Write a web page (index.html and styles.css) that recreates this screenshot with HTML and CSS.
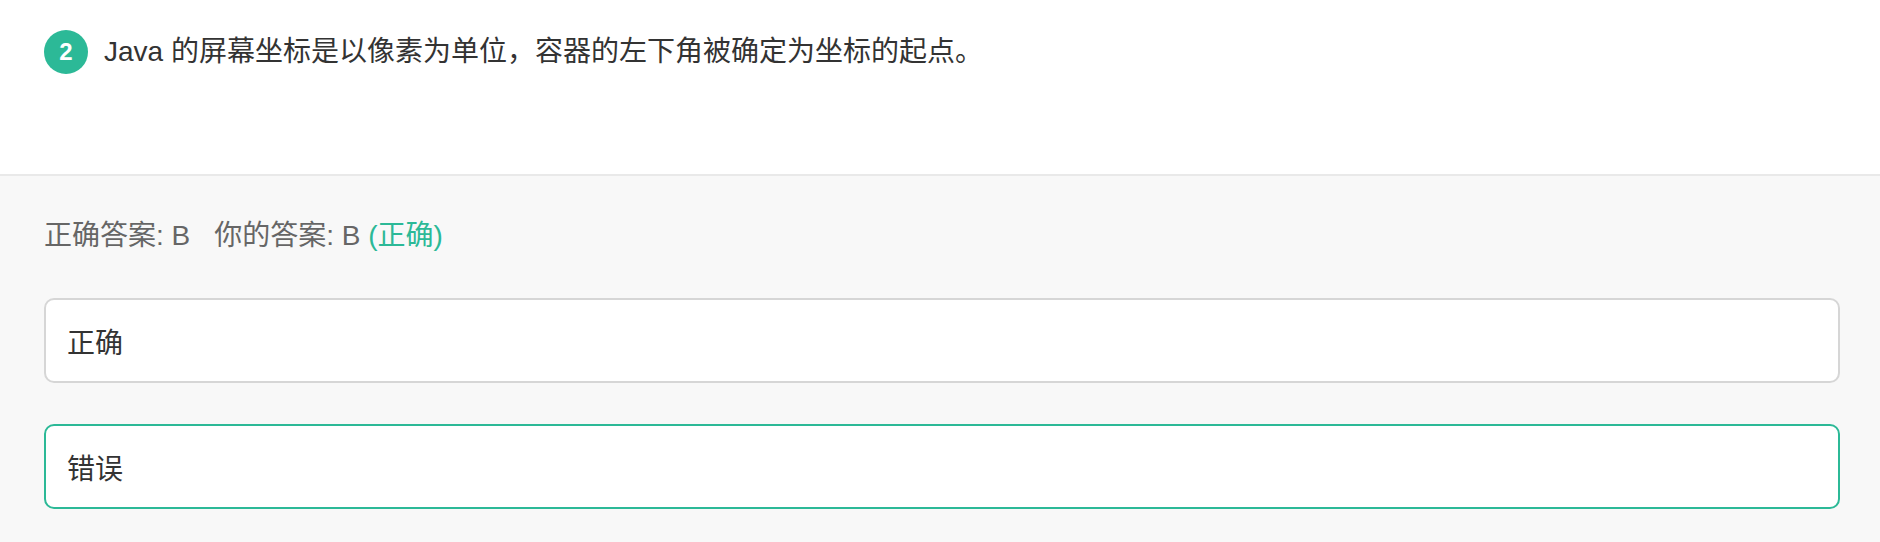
FILE: index.html
```html
<!DOCTYPE html>
<html lang="zh-CN">
<head>
<meta charset="utf-8">
<title>题目</title>
<link rel="stylesheet" href="styles.css">
</head>
<body>
<div class="question">
  <div class="question-row">
    <span class="num">2</span>
    <span class="q-text">Java 的屏幕坐标是以像素为单位，容器的左下角被确定为坐标的起点。</span>
  </div>
</div>
<div class="answer-section">
  <div class="answer-line">
    <span>正确答案: B</span><span class="your">你的答案: B <span class="ok">(正确)</span></span>
  </div>
  <div class="options">
    <div class="option">正确</div>
    <div class="option selected">错误</div>
  </div>
</div>
</body>
</html>
```
FILE: styles.css
```css
html, body {
  margin: 0;
  padding: 0;
  background: #f8f8f8;
  font-family: "Liberation Sans", "Noto Sans CJK SC", sans-serif;
}

.question {
  background: #ffffff;
  height: 176px;
  box-sizing: border-box;
  padding: 30px 40px 0 44px;
  border-bottom: 2px solid #e9e9e9;
}

.question-row {
  display: flex;
  align-items: center;
  gap: 16px;
}

.num {
  flex: none;
  width: 44px;
  height: 44px;
  border-radius: 50%;
  background: #2cb997;
  color: #ffffff;
  font-size: 24px;
  font-weight: bold;
  display: flex;
  align-items: center;
  justify-content: center;
}

.q-text {
  font-size: 28px;
  line-height: 44px;
  color: #333333;
}

.answer-section {
  padding: 40px 40px 33px 44px;
}

.answer-line {
  font-size: 28px;
  line-height: 40px;
  color: #666666;
}

.your {
  margin-left: 24px;
}

.ok {
  color: #2cb997;
}

.options {
  margin-top: 42px;
  display: flex;
  flex-direction: column;
  gap: 41px;
}

.option {
  height: 85px;
  box-sizing: border-box;
  border: 2px solid #d6d6d6;
  border-radius: 10px;
  background: #ffffff;
  padding: 0 21px;
  display: flex;
  align-items: center;
  font-size: 28px;
  color: #333333;
}

.option.selected {
  border-color: #2cb997;
}
```
